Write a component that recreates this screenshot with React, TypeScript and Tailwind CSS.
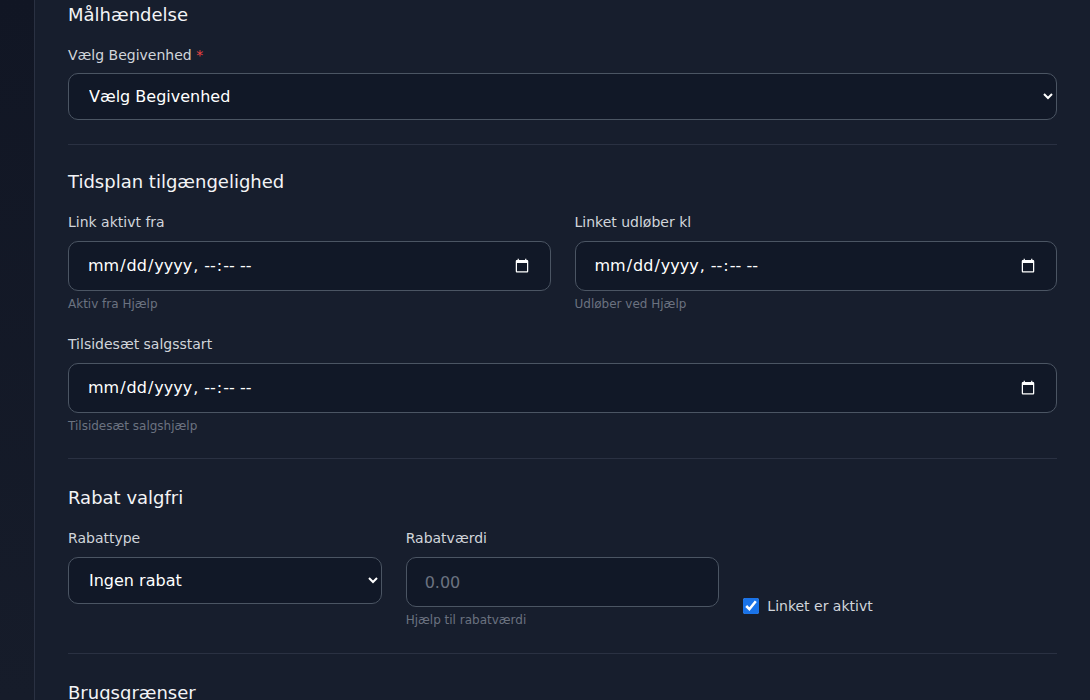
import React from "react";

const font = { fontFamily: '"DejaVu Sans", sans-serif' };

function Label({ children, req }: { children: React.ReactNode; req?: boolean }) {
  return (
    <div className="text-[14px] text-[#d1d5db] mb-[9px] leading-[20px]">
      {children}
      {req && <span className="text-[#ef4444]"> *</span>}
    </div>
  );
}
function Help({ children }: { children: React.ReactNode }) {
  return <div className="text-[12px] text-[#6b7280] mt-[5px] leading-[16px]">{children}</div>;
}
const inputCls =
  "w-full h-[50px] rounded-[10px] border border-[#4b5563] bg-[#111827] px-[18px] text-[16px] text-white [color-scheme:dark] outline-none";
const selectCls =
  "w-full h-[47px] rounded-[10px] border border-[#4b5563] bg-[#111827] px-[16px] text-[16px] text-white [color-scheme:dark] outline-none";

export default function App() {
  return (
    <div style={font} className="flex w-[1090px] h-[700px] overflow-hidden bg-[#1a2030]">
      <div className="w-[35px] shrink-0 bg-gradient-to-b from-[#111624] to-[#161c2a] border-r border-[#2a3142]" />
      <div className="flex-1 bg-[#171e2d] pl-[33px] pr-[33px] pt-[3px]">
        <h2 className="text-[18px] text-[#f3f4f6] leading-[24px]">Målhændelse</h2>
        <div className="mt-[18px]">
          <Label req>Vælg Begivenhed</Label>
          <select className={selectCls + " -mt-[1px]"}>
            <option>Vælg Begivenhed</option>
          </select>
        </div>
        <hr className="border-[#2a3142] mt-[24px]" />
        <h2 className="text-[18px] text-[#f3f4f6] leading-[24px] mt-[25px]">Tidsplan tilgængelighed</h2>
        <div className="grid grid-cols-2 gap-x-[24px] mt-[18px]">
          <div>
            <Label>Link aktivt fra</Label>
            <input type="datetime-local" className={inputCls} />
            <Help>Aktiv fra Hjælp</Help>
          </div>
          <div>
            <Label>Linket udløber kl</Label>
            <input type="datetime-local" className={inputCls} />
            <Help>Udløber ved Hjælp</Help>
          </div>
        </div>
        <div className="mt-[22px]">
          <Label>Tilsidesæt salgsstart</Label>
          <input type="datetime-local" className={inputCls} />
          <Help>Tilsidesæt salgshjælp</Help>
        </div>
        <hr className="border-[#2a3142] mt-[24px]" />
        <h2 className="text-[18px] text-[#f3f4f6] leading-[24px] mt-[27px]">Rabat valgfri</h2>
        <div className="grid grid-cols-3 gap-x-[24px] mt-[18px] items-start">
          <div>
            <Label>Rabattype</Label>
            <select className={selectCls}>
              <option>Ingen rabat</option>
            </select>
          </div>
          <div>
            <Label>Rabatværdi</Label>
            <input placeholder="0.00" className={inputCls + " px-[17px] placeholder:text-[#6b7280]"} />
            <Help>Hjælp til rabatværdi</Help>
          </div>
          <label className="flex items-center gap-[8px] mt-[39px] h-[18px] self-start translate-y-[30px] text-[14px] text-[#d1d5db]">
            <input type="checkbox" defaultChecked className="w-[16px] h-[16px] accent-[#1a73e8] [color-scheme:light]" />
            Linket er aktivt
          </label>
        </div>
        <hr className="border-[#2a3142] mt-[25px]" />
        <h2 className="text-[18px] text-[#f3f4f6] leading-[24px] mt-[27px]">Brugsgrænser</h2>
      </div>
    </div>
  );
}
